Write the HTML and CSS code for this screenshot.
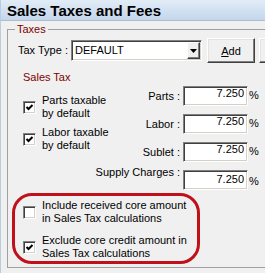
FILE: index.html
```html
<!DOCTYPE html>
<html>
<head>
    <title>Sales Taxes and Fees</title>
    <meta charset="utf-8">
    <link rel="stylesheet" href="styles.css">
</head>
<body>
    <div class="window">
        <div class="titlebar">Sales Taxes and Fees</div>

        <fieldset class="group">
            <legend>Taxes</legend>

            <!-- Tax type picker -->
            <div class="taxtype-row">
                <span class="field-label">Tax Type :</span>
                <div class="combo">
                    <span class="combo-value">DEFAULT</span>
                    <span class="combo-btn">
                        <svg width="7" height="4" viewBox="0 0 7 4"><path d="M0 0 H7 L3.5 4 Z" fill="#000"/></svg>
                    </span>
                </div>
                <button class="btn"><u>A</u>dd</button>
                <button class="btn"></button>
            </div>

            <!-- Sales tax rates -->
            <div class="salestax">
                <div class="salestax-left">
                    <div class="section-title">Sales Tax</div>
                    <label class="check">
                        <span class="box">
                            <svg width="9" height="9" viewBox="0 0 9 9"><path d="M1.5 4 L3.5 6 L7.5 2" fill="none" stroke="#000" stroke-width="2"/></svg>
                        </span>
                        <span class="check-text">Parts taxable<br>by default</span>
                    </label>
                    <label class="check">
                        <span class="box">
                            <svg width="9" height="9" viewBox="0 0 9 9"><path d="M1.5 4 L3.5 6 L7.5 2" fill="none" stroke="#000" stroke-width="2"/></svg>
                        </span>
                        <span class="check-text">Labor taxable<br>by default</span>
                    </label>
                </div>

                <div class="rates">
                    <span class="rate-label">Parts :</span>
                    <span class="rate-input">7.250</span>
                    <span class="pct">%</span>

                    <span class="rate-label">Labor :</span>
                    <span class="rate-input">7.250</span>
                    <span class="pct">%</span>

                    <span class="rate-label">Sublet :</span>
                    <span class="rate-input">7.250</span>
                    <span class="pct">%</span>

                    <span class="rate-label rate-label-top">Supply Charges :</span>
                    <span class="rate-input rate-input-low">7.250</span>
                    <span class="pct pct-low">%</span>
                </div>
            </div>

            <!-- Core amount options (highlighted) -->
            <div class="core-box">
                <label class="check">
                    <span class="box"></span>
                    <span class="check-text">Include received core amount<br>in Sales Tax calculations</span>
                </label>
                <label class="check">
                    <span class="box">
                        <svg width="9" height="9" viewBox="0 0 9 9"><path d="M1.5 4 L3.5 6 L7.5 2" fill="none" stroke="#000" stroke-width="2"/></svg>
                    </span>
                    <span class="check-text">Exclude core credit amount in<br>Sales Tax calculations</span>
                </label>
            </div>
        </fieldset>
    </div>
</body>
</html>
```

FILE: styles.css
```css
body {
    margin: 0;
    width: 265px;
    height: 273px;
    overflow: hidden;
    background: #f0f0f0;
    font-family: "Liberation Sans", Arial, sans-serif;
    font-size: 11px;
    line-height: 13px;
    color: #000;
}

.window {
    height: 100%;
    border-left: 1px solid #b9cce0;
}

.titlebar {
    height: 20px;
    padding-left: 6px;
    background: linear-gradient(to bottom, #e2ecf7, #c2d6ec);
    border-bottom: 1px solid #aebdcc;
    font-size: 15px;
    font-weight: bold;
    line-height: 21px;
}

.group {
    width: 300px;
    margin: 2px 0 0 6px;
    padding: 2px 0 3px 0;
    border: 1px solid #a0a0a0;
    box-sizing: border-box;
    min-width: 0;
}

.group legend {
    margin-left: 7px;
    padding: 0 2px;
    color: #800000;
    line-height: 13px;
}

.taxtype-row {
    display: flex;
    align-items: center;
    padding-left: 10px;
    height: 25px;
}

.field-label {
    width: 53px;
    flex-shrink: 0;
}

.combo {
    width: 131px;
    height: 21px;
    box-sizing: border-box;
    flex-shrink: 0;
    display: flex;
    align-items: center;
    background: #fff;
    border: 1px solid;
    border-color: #808080 #fff #fff #808080;
    box-shadow: inset 1px 1px 0 #404040, inset -1px -1px 0 #d4d0c8;
    padding: 1px 1px 1px 3px;
}

.combo-value {
    flex: 1;
}

.combo-btn {
    width: 13px;
    height: 17px;
    box-sizing: border-box;
    display: flex;
    align-items: center;
    justify-content: center;
    background: #f0f0f0;
    border: 1px solid;
    border-color: #fff #404040 #404040 #fff;
    box-shadow: inset -1px -1px 0 #808080;
}

.btn {
    width: 48px;
    height: 25px;
    margin-left: 5px;
    padding: 0;
    flex-shrink: 0;
    font-family: inherit;
    font-size: 11px;
    color: #000;
    background: #f0f0f0;
    border: 1px solid;
    border-color: #fff #404040 #404040 #fff;
    box-shadow: inset -1px -1px 0 #808080, inset 1px 1px 0 #e3e3e3;
}

.btn + .btn {
    margin-left: 4px;
}

.salestax {
    display: flex;
    margin-top: 8px;
}

.salestax-left {
    width: 62px;
    flex-shrink: 0;
    padding-left: 15px;
}

.section-title {
    color: #800000;
    margin-bottom: 10px;
}

.check {
    display: flex;
    align-items: center;
    gap: 6px;
}

.check-text {
    white-space: nowrap;
}

.salestax-left .check + .check {
    margin-top: 6px;
}

.box {
    width: 13px;
    height: 13px;
    box-sizing: border-box;
    flex-shrink: 0;
    display: flex;
    align-items: center;
    justify-content: center;
    background: #fff;
    border: 1px solid;
    border-color: #808080 #fff #fff #808080;
    box-shadow: inset 1px 1px 0 #404040, inset -1px -1px 0 #d4d0c8;
}

.rates {
    display: grid;
    grid-template-columns: 98px 65px auto;
    grid-auto-rows: 20px;
    row-gap: 8px;
    margin-top: 15px;
}

.rate-label {
    align-self: center;
    text-align: right;
    margin-right: 3px;
    white-space: nowrap;
}

.rate-label-top {
    align-self: start;
    margin-top: -4px;
}

.rate-input {
    box-sizing: border-box;
    background: #fff;
    border: 1px solid;
    border-color: #808080 #fff #fff #808080;
    box-shadow: inset 1px 1px 0 #404040, inset -1px -1px 0 #d4d0c8;
    text-align: right;
    padding: 0 3px 0 0;
}

.rate-input-low {
    padding-top: 2px;
}

.pct {
    margin-left: 1px;
    padding-top: 3px;
}

.pct-low {
    padding-top: 5px;
}

.core-box {
    width: 188px;
    box-sizing: border-box;
    margin: 3px 0 0 4px;
    padding: 3px 0 1px 8px;
    border: 3px solid #c0101a;
    border-radius: 20px;
}

.core-box .check + .check {
    margin-top: 9px;
}
```
